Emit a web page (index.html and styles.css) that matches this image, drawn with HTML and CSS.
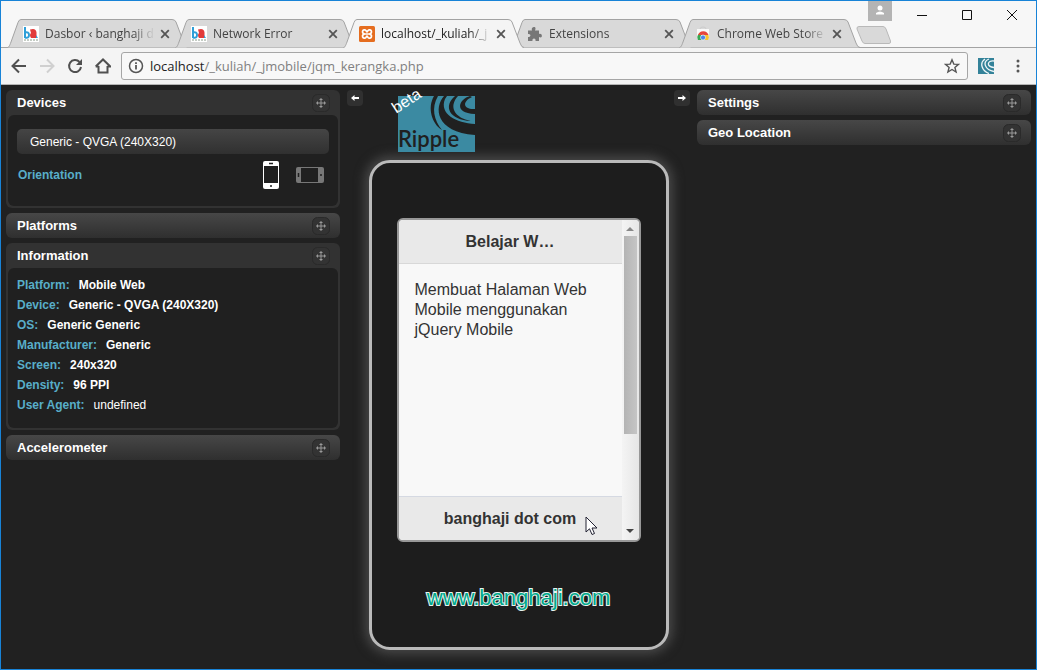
FILE: index.html
```html
<!DOCTYPE html>
<html lang="id">
<head>
<meta charset="utf-8">
<title>localhost/_kuliah/_jmobile/jqm_kerangka.php</title>
<link rel="stylesheet" href="styles.css">
</head>
<body>
<svg class="defs" aria-hidden="true">
  <symbol id="tab-shape" viewBox="0 0 182 29"><path d="M0.5 28.5C2 28 2.500 27 4 23L11 3.500Q12 .5 14 .5H165Q168 .5 169 3L177 24Q178.500 28.500 181 28.500" /></symbol>
  <symbol id="close" viewBox="0 0 10 10"><path d="M1.200 1.200L8.800 8.800M8.800 1.200L1.200 8.800" fill="none" stroke="#555" stroke-width="1.800"/></symbol>
  <symbol id="fav-bh" viewBox="0 0 16 16"><path fill="#fff" d="M0 0h16v16H0z"/><path d="M2 1v11" stroke="#2f9fd8" stroke-width="2"/><path d="M2 6.500q4-1 4 2.500t-4 2.500" fill="none" stroke="#2f9fd8" stroke-width="2"/><path d="M7 3.500q6-2 6.500 3V12H8q-2-3 0-5z" fill="#e23b3b"/><path d="M13 9l2 3h-2z" fill="#2f9fd8"/><path d="M1 14h14" stroke="#8a9a8a" stroke-dasharray="2 1"/></symbol>
  <symbol id="move" viewBox="0 0 18 18"><rect x=".5" y=".5" width="17" height="17" rx="5" fill="#333" stroke="#2a2a2a"/><path d="M9 5v8M5 9h8" stroke="#999"/><path d="M9 4l2 2H7zM9 14l2-2H7zM4 9l2-2v4zM14 9l-2-2v4z" fill="#999"/></symbol>
</svg>

<header class="tabstrip">
  <nav class="tabs" aria-label="Tab">
    <div class="tab"><svg class="shape"><use href="#tab-shape"/></svg><svg class="favicon"><use href="#fav-bh"/></svg><span class="tab-title">Dasbor ‹ banghaji d</span><button class="tab-close" aria-label="Tutup"><svg><use href="#close"/></svg></button></div>
    <div class="tab"><svg class="shape"><use href="#tab-shape"/></svg><svg class="favicon"><use href="#fav-bh"/></svg><span class="tab-title">Network Error</span><button class="tab-close" aria-label="Tutup"><svg><use href="#close"/></svg></button></div>
    <div class="tab active"><svg class="shape"><use href="#tab-shape"/></svg><svg class="favicon" viewBox="0 0 16 16"><rect width="16" height="16" rx="1.500" fill="#e56d1f"/><path d="M5.500 8h5M5.800 7.800A2 2 0 1 1 7 4.500Q7.500 6 8 6T9 4.500A2 2 0 1 1 10.200 7.800M5.800 8.200A2 2 0 1 0 7 11.500Q7.500 10 8 10T9 11.500A2 2 0 1 0 10.200 8.200" fill="none" stroke="#fff" stroke-width="1.700"/></svg><span class="tab-title">localhost/_kuliah/_j</span><button class="tab-close" aria-label="Tutup"><svg><use href="#close"/></svg></button></div>
    <div class="tab"><svg class="shape"><use href="#tab-shape"/></svg><svg class="favicon" viewBox="0 0 16 16"><path fill="#777" d="M1 4.500h4C3.500 1 8.500 0 8.500 2.500 8.500 3.500 8 4 8 4.500h4V8c3-1.500 4 3.500 1.500 3.500L12 11v4H8.500c1-3.500-4-3.500-3 0H1v-4c3 .5 3.500-3.500 0-3z"/></svg><span class="tab-title">Extensions</span><button class="tab-close" aria-label="Tutup"><svg><use href="#close"/></svg></button></div>
    <div class="tab"><svg class="shape"><use href="#tab-shape"/></svg><svg class="favicon" viewBox="0 0 16 16"><path d="M5 3q0-2 3-2t3 2" fill="none" stroke="#ccc"/><path fill="#f8f8f8" d="M2 3h12v10H2z"/><path d="M3 14a5.500 5.500 0 0 1 2-7l3 7z" fill="#39a852"/><path d="M3 9a5.500 5.500 0 0 1 10.500 0z" fill="#e6453b"/><path d="M9 9h4.500q1 3-.5 5H8z" fill="#f7c52d"/><circle cx="8" cy="11.500" r="2.500" fill="#4a86e8" stroke="#fff" stroke-width=".6"/></svg><span class="tab-title">Chrome Web Store</span><button class="tab-close" aria-label="Tutup"><svg><use href="#close"/></svg></button></div>
  </nav>
  <button class="new-tab" aria-label="Tab baru"><svg viewBox="0 0 36 18"><path d="M3 .5H27Q29 .5 30 3L34.500 15Q35 17.500 33 17.500H9Q7 17.500 6 15L1 3Q.5 .5 3 .5Z" fill="#d9d9d9" stroke="#b9b9b9"/></svg></button>
  <div class="window-controls">
    <button class="avatar" aria-label="Profil"><svg viewBox="0 0 24 20"><circle cx="12" cy="7" r="2.500" fill="#fff"/><path d="M8 13.500v-1.500q4-3 8 0v1.500z" fill="#fff"/></svg></button>
    <button class="control" aria-label="Perkecil"><svg viewBox="0 0 12 12"><path d="M1 6.500h10"/></svg></button>
    <button class="control" aria-label="Perbesar"><svg viewBox="0 0 12 12"><path d="M1.500 1.500h9v9h-9z"/></svg></button>
    <button class="control" aria-label="Tutup jendela"><svg viewBox="0 0 12 12"><path d="M1 1l10 10M11 1L1 11"/></svg></button>
  </div>
</header>

<div class="toolbar">
  <button class="tool" aria-label="Kembali"><svg viewBox="0 0 16 16"><path d="M15 8H2M8 1.500L1.500 8L8 14.500"/></svg></button>
  <button class="tool disabled" aria-label="Maju"><svg viewBox="0 0 16 16"><path d="M1 8h13M8 1.500L14.500 8L8 14.500"/></svg></button>
  <button class="tool" aria-label="Muat ulang"><svg viewBox="0 0 16 16"><path d="M12.500 4A6 6 0 1 0 14 9"/><path d="M15 1v6H9z" class="solid"/></svg></button>
  <button class="tool" aria-label="Beranda"><svg viewBox="0 0 16 16"><path d="M3.500 8v6.500h9V8M.7 8.500L8 1.500L15.300 8.500H12.500M.7 8.500H3.500"/></svg></button>
  <div class="omnibox">
    <svg class="info" viewBox="0 0 16 16"><circle cx="8" cy="8" r="6.500" fill="none" stroke="#555" stroke-width="1.500"/><path d="M8 7v4.500M8 4.200v1.800" stroke="#555" stroke-width="1.800"/></svg>
    <span class="url" role="textbox" aria-label="Alamat" tabindex="0"><span class="host">localhost</span>/_kuliah/_jmobile/jqm_kerangka.php</span>
    <button class="star" aria-label="Tandai"><svg viewBox="0 0 16 16"><path d="M8 1.800l1.800 4.300 4.700.3-3.600 3 1.200 4.600L8 11.500 3.900 14l1.200-4.600-3.600-3 4.700-.3z" fill="none" stroke="#555" stroke-width="1.400"/></svg></button>
  </div>
  <button class="extension" aria-label="Ripple"><svg viewBox="0 0 16 16"><path d="M0 0h16v16H0z" fill="#338299"/><path d="M7 1C1 5 4 13 11 15.500M11 1C4 4 7 12 16 13.500M16 3C9 2 8 9 16 9.500" fill="none" stroke="#eef6f8" stroke-width="1.300"/></svg></button>
  <button class="menu" aria-label="Menu"><svg viewBox="0 0 4 16"><circle cx="2" cy="3" r="1.500"/><circle cx="2" cy="8" r="1.500"/><circle cx="2" cy="13" r="1.500"/></svg></button>
</div>

<main class="ripple">
  <aside class="column">
    <section class="panel open">
      <h2 class="panel-head">Devices <button class="move" aria-label="Pindahkan Devices"><svg><use href="#move"/></svg></button></h2>
      <div class="panel-body devices">
        <select class="device-select" aria-label="Device"><option>Generic - QVGA (240X320)</option></select>
        <div class="orientation">
          <span class="label">Orientation</span>
          <button class="portrait" aria-label="Portrait"><svg viewBox="0 0 16 28"><rect width="16" height="28" rx="2" fill="#fff"/><path d="M1 5h14v17H1z" fill="#202020"/><path d="M6 2.500h4M7 25h2" stroke="#202020" stroke-width="1.500"/></svg></button>
          <button class="landscape" aria-label="Landscape"><svg viewBox="0 0 28 16"><rect width="28" height="16" rx="2" fill="#777"/><path d="M5 1h17v14H5z" fill="#202020"/><path d="M2.500 6v4M25 7v2" stroke="#202020" stroke-width="1.500"/></svg></button>
        </div>
      </div>
    </section>
    <section class="panel"><h2 class="panel-head">Platforms <button class="move" aria-label="Pindahkan Platforms"><svg><use href="#move"/></svg></button></h2></section>
    <section class="panel open">
      <h2 class="panel-head">Information <button class="move" aria-label="Pindahkan Information"><svg><use href="#move"/></svg></button></h2>
      <dl class="panel-body facts">
        <div><dt>Platform:</dt><dd>Mobile Web</dd></div>
        <div><dt>Device:</dt><dd>Generic - QVGA (240X320)</dd></div>
        <div><dt>OS:</dt><dd>Generic Generic</dd></div>
        <div><dt>Manufacturer:</dt><dd>Generic</dd></div>
        <div><dt>Screen:</dt><dd>240x320</dd></div>
        <div><dt>Density:</dt><dd>96 PPI</dd></div>
        <div><dt>User Agent:</dt><dd class="plain">undefined</dd></div>
      </dl>
    </section>
    <section class="panel"><h2 class="panel-head">Accelerometer <button class="move" aria-label="Pindahkan Accelerometer"><svg><use href="#move"/></svg></button></h2></section>
  </aside>

  <div class="stage">
    <div class="stage-head">
      <button class="arrow" aria-label="Panel kiri"><svg viewBox="0 0 16 16"><path d="M4 8l3.500-3v2H12v2H7.500v2z"/></svg></button>
      <div class="logo">
        <svg viewBox="0 0 77 56">
          <path d="M0 0h77v56H0z" fill="#3b8aa2"/>
          <g fill="#202020">
            <path d="M36 0C29 12 34 28 44 34C36 24 33 12 40 0Z"/>
            <path d="M46 0C36 11 37 36 77 39V28C58 27 41 18 47 3L49 0Z"/>
            <path d="M57 0C45 10 51 24 73 25C57 22 50 11 60 0Z"/>
            <path d="M72 0C61 3 55 17 77 18V13C66 14 63 6 74 1Z"/>
          </g>
          <text x="0" y="51" class="logo-word">Ripple</text>
        </svg>
        <span class="beta">beta</span>
      </div>
      <button class="arrow" aria-label="Panel kanan"><svg viewBox="0 0 16 16"><path d="M12 8L8.500 5v2H4v2h4.500v2z"/></svg></button>
    </div>
    <div class="phone">
      <div class="screen">
        <article class="page">
          <h1 class="page-bar">Belajar W…</h1>
          <p class="page-text">Membuat Halaman Web Mobile menggunakan jQuery Mobile</p>
          <footer class="page-bar foot">banghaji dot com</footer>
        </article>
        <div class="scrollbar"><svg class="up" viewBox="0 0 8 4"><path d="M0 4L4 0l4 4z"/></svg><div class="thumb"></div><svg class="down" viewBox="0 0 8 4"><path d="M0 0l4 4 4-4z"/></svg></div>
        <svg class="cursor" viewBox="0 0 13 20"><path d="M1 1v15l3.500-3.200L7 18.500l2.500-1L7 12h5z" fill="#fff" stroke="#223" /></svg>
      </div>
      <div class="watermark">www.banghaji.com</div>
    </div>
  </div>

  <aside class="column">
    <section class="panel"><h2 class="panel-head">Settings <button class="move" aria-label="Pindahkan Settings"><svg><use href="#move"/></svg></button></h2></section>
    <section class="panel"><h2 class="panel-head">Geo Location <button class="move" aria-label="Pindahkan Geo Location"><svg><use href="#move"/></svg></button></h2></section>
  </aside>
</main>
</body>
</html>
```

FILE: styles.css
```css
* { box-sizing: border-box; }
body {
  margin: 0;
  min-height: 100vh;
  display: flex;
  flex-direction: column;
  border: 1px solid #1883d7;
  background: #212121;
  font-family: "Liberation Sans", Arial, sans-serif;
}
svg { display: block; width: 100%; height: 100%; }
.defs { position: absolute; width: 0; height: 0; }
button { padding: 0; border: 0; background: none; color: inherit; flex: none; }
h1, h2, p, dl, dd { margin: 0; }

/* Tab strip */
.tabstrip {
  position: relative;
  display: flex;
  align-items: flex-end;
  height: 47px;
  padding-left: 6px;
  background: #f7f7f7;
  box-shadow: inset 0 -1px #a3a3a3;
  font-family: "Open Sans", sans-serif;
}
.tabs { display: flex; }
.tab {
  position: relative;
  display: flex;
  align-items: center;
  width: 182px;
  height: 29px;
  margin-right: -14px;
  padding: 0 19px 0 16px;
}
.tab .shape { position: absolute; inset: 0; fill: #d9d9d9; stroke: #a3a3a3; }
.tab.active { z-index: 1; }
.tab.active .shape { fill: #f4f4f4; }
.tab.active::after {
  content: "";
  position: absolute;
  left: 2px;
  right: 3px;
  bottom: 0;
  height: 1px;
  background: #f4f4f4;
}
.favicon { position: relative; flex: none; width: 16px; height: 16px; }
.tab-title {
  position: relative;
  flex: 1;
  min-width: 0;
  margin: 0 5px 0 6px;
  white-space: nowrap;
  font-size: 12px;
  line-height: 16px;
  color: #444;
  -webkit-mask-image: linear-gradient(to right, #000 80%, transparent);
  mask-image: linear-gradient(to right, #000 80%, transparent);
}
.active .tab-title { color: #222; }
.tab-close { position: relative; width: 10px; height: 10px; }
.new-tab { width: 36px; height: 18px; margin: 0 0 4px 9px; }
.window-controls { position: absolute; top: 0; right: 2px; display: flex; }
.avatar { width: 24px; height: 20px; margin-right: 7px; background: #b4b4b4; }
.control { display: grid; place-items: center; width: 45px; height: 28px; }
.control svg { width: 12px; height: 12px; fill: none; stroke: #111; }

/* Toolbar */
.toolbar {
  display: flex;
  align-items: center;
  height: 37px;
  padding: 0 16px 0 10px;
  background: #f4f4f4;
  border-bottom: 1px solid #b5b5b5;
}
.tool { width: 16px; height: 16px; margin-right: 12px; }
.tool svg { fill: none; stroke: #505050; stroke-width: 2; }
.tool .solid { fill: #505050; stroke: none; }
.tool.disabled svg { stroke: #d0d0d0; }
.omnibox {
  display: flex;
  flex: 1;
  align-items: center;
  min-width: 0;
  height: 28px;
  margin-left: -2px;
  padding: 0 7px 0 6px;
  border: 1px solid #a6a6a6;
  border-radius: 3px;
  background: #f8f8f8;
}
.info { flex: none; width: 16px; height: 16px; margin-right: 6px; }
.url {
  flex: 1;
  overflow: hidden;
  white-space: nowrap;
  font: 13px/20px "Open Sans", sans-serif;
  color: #808080;
}
.host { color: #222; }
.star, .extension { width: 16px; height: 16px; }
.extension { margin-left: 10px; }
.menu { width: 4px; height: 16px; margin-left: 22px; fill: #555; }

/* Emulator */
.ripple {
  flex: 1;
  display: grid;
  grid-template-columns: minmax(0, 1fr) 357px minmax(0, 1fr);
  align-items: start;
  padding: 5px 5px 19px;
  background: #212121;
}
.column { display: flex; flex-direction: column; gap: 5px; }
.panel { border-radius: 6px; background: linear-gradient(#474747, #2f2f2f); }
.panel.open { padding: 0 2px 2px; background: #323232; }
.panel-head {
  display: flex;
  align-items: center;
  justify-content: space-between;
  height: 25px;
  padding: 0 10px 0 11px;
  font-size: 13px;
  line-height: 16px;
  color: #fff;
}
.open .panel-head { padding: 0 8px 0 9px; }
.move { width: 18px; height: 18px; }
.panel-body { border-radius: 6px; background: #202020; font-size: 12px; }
.devices { padding: 14px 9px 17px; }
.device-select {
  display: block;
  width: 100%;
  height: 25px;
  padding: 0 13px;
  border: 0;
  border-radius: 5px;
  appearance: none;
  background: linear-gradient(#454545, #303030);
  color: #fff;
  font: 12px "Liberation Sans", Arial, sans-serif;
}
.orientation {
  display: flex;
  align-items: center;
  gap: 17px;
  padding: 7px 5px 0 1px;
}
.label { flex: 1; font-weight: bold; color: #58aec9; }
.portrait { width: 16px; height: 28px; }
.landscape { width: 28px; height: 16px; }
.facts { padding: 7px 9px 13px; font-weight: bold; line-height: 20px; }
.facts div { display: flex; gap: 9px; }
.facts dt { color: #58aec9; }
.facts dd { color: #fff; }
.facts .plain { font-weight: normal; }

/* Handset */
.stage { display: flex; flex-direction: column; align-items: center; }
.stage-head {
  display: flex;
  align-items: flex-start;
  align-self: stretch;
  height: 70px;
  padding: 0 7px;
}
.arrow { width: 16px; height: 16px; border-radius: 4px; background: #303030; fill: #fff; }
.stage-head .arrow:last-child { margin-left: auto; }
.logo { position: relative; width: 77px; height: 56px; margin: 6px 0 0 35px; }
.logo-word { font: 600 22px Lato, sans-serif; fill: #202020; }
.beta {
  position: absolute;
  left: -7px;
  top: -5px;
  font-size: 16px;
  line-height: 20px;
  color: #fff;
  transform: rotate(-33deg);
}
.phone {
  display: flex;
  flex-direction: column;
  align-items: center;
  width: 300px;
  padding: 55px 0 37px;
  border: 3px solid #bababa;
  border-radius: 21px;
  background: #1d1d1d;
  box-shadow: 0 0 11px 4px #484848;
}
.screen {
  position: relative;
  display: flex;
  width: 244px;
  height: 324px;
  border: 2px solid #989898;
  border-radius: 6px;
  background: #f8f8f8;
}
.page { display: flex; flex: 1; flex-direction: column; color: #333; }
.page-bar {
  height: 44px;
  border-bottom: 1px solid #d8d8d8;
  border-radius: 4px 0 0 0;
  background: #e9e9e9;
  font-size: 16px;
  font-weight: bold;
  line-height: 44px;
  text-align: center;
}
.page-text { flex: 1; padding: 16px; font-size: 16px; line-height: 20px; }
.page-bar.foot { border-width: 1px 0 0; border-top: 1px solid #d5d9e2; border-radius: 0 0 0 4px; }
.scrollbar {
  display: flex;
  flex-direction: column;
  align-items: center;
  width: 17px;
  padding: 7px 0;
  border-radius: 0 4px 4px 0;
  background: linear-gradient(to right, #f4f4f4, #e6e6e6);
}
.scrollbar svg { width: 8px; height: 4px; fill: #888; }
.scrollbar .down { margin-top: auto; fill: #444; }
.thumb { width: 13px; height: 198px; margin-top: 5px; background: linear-gradient(to right, #b4b4b4, #c5c5c5); }
.cursor { position: absolute; left: 186px; top: 296px; width: 13px; height: 20px; }
.watermark {
  margin-top: 44px;
  font-size: 22px;
  line-height: 24px;
  color: #00a98c;
  -webkit-text-stroke: 2px #e6f3f0;
  paint-order: stroke fill;
}
```
